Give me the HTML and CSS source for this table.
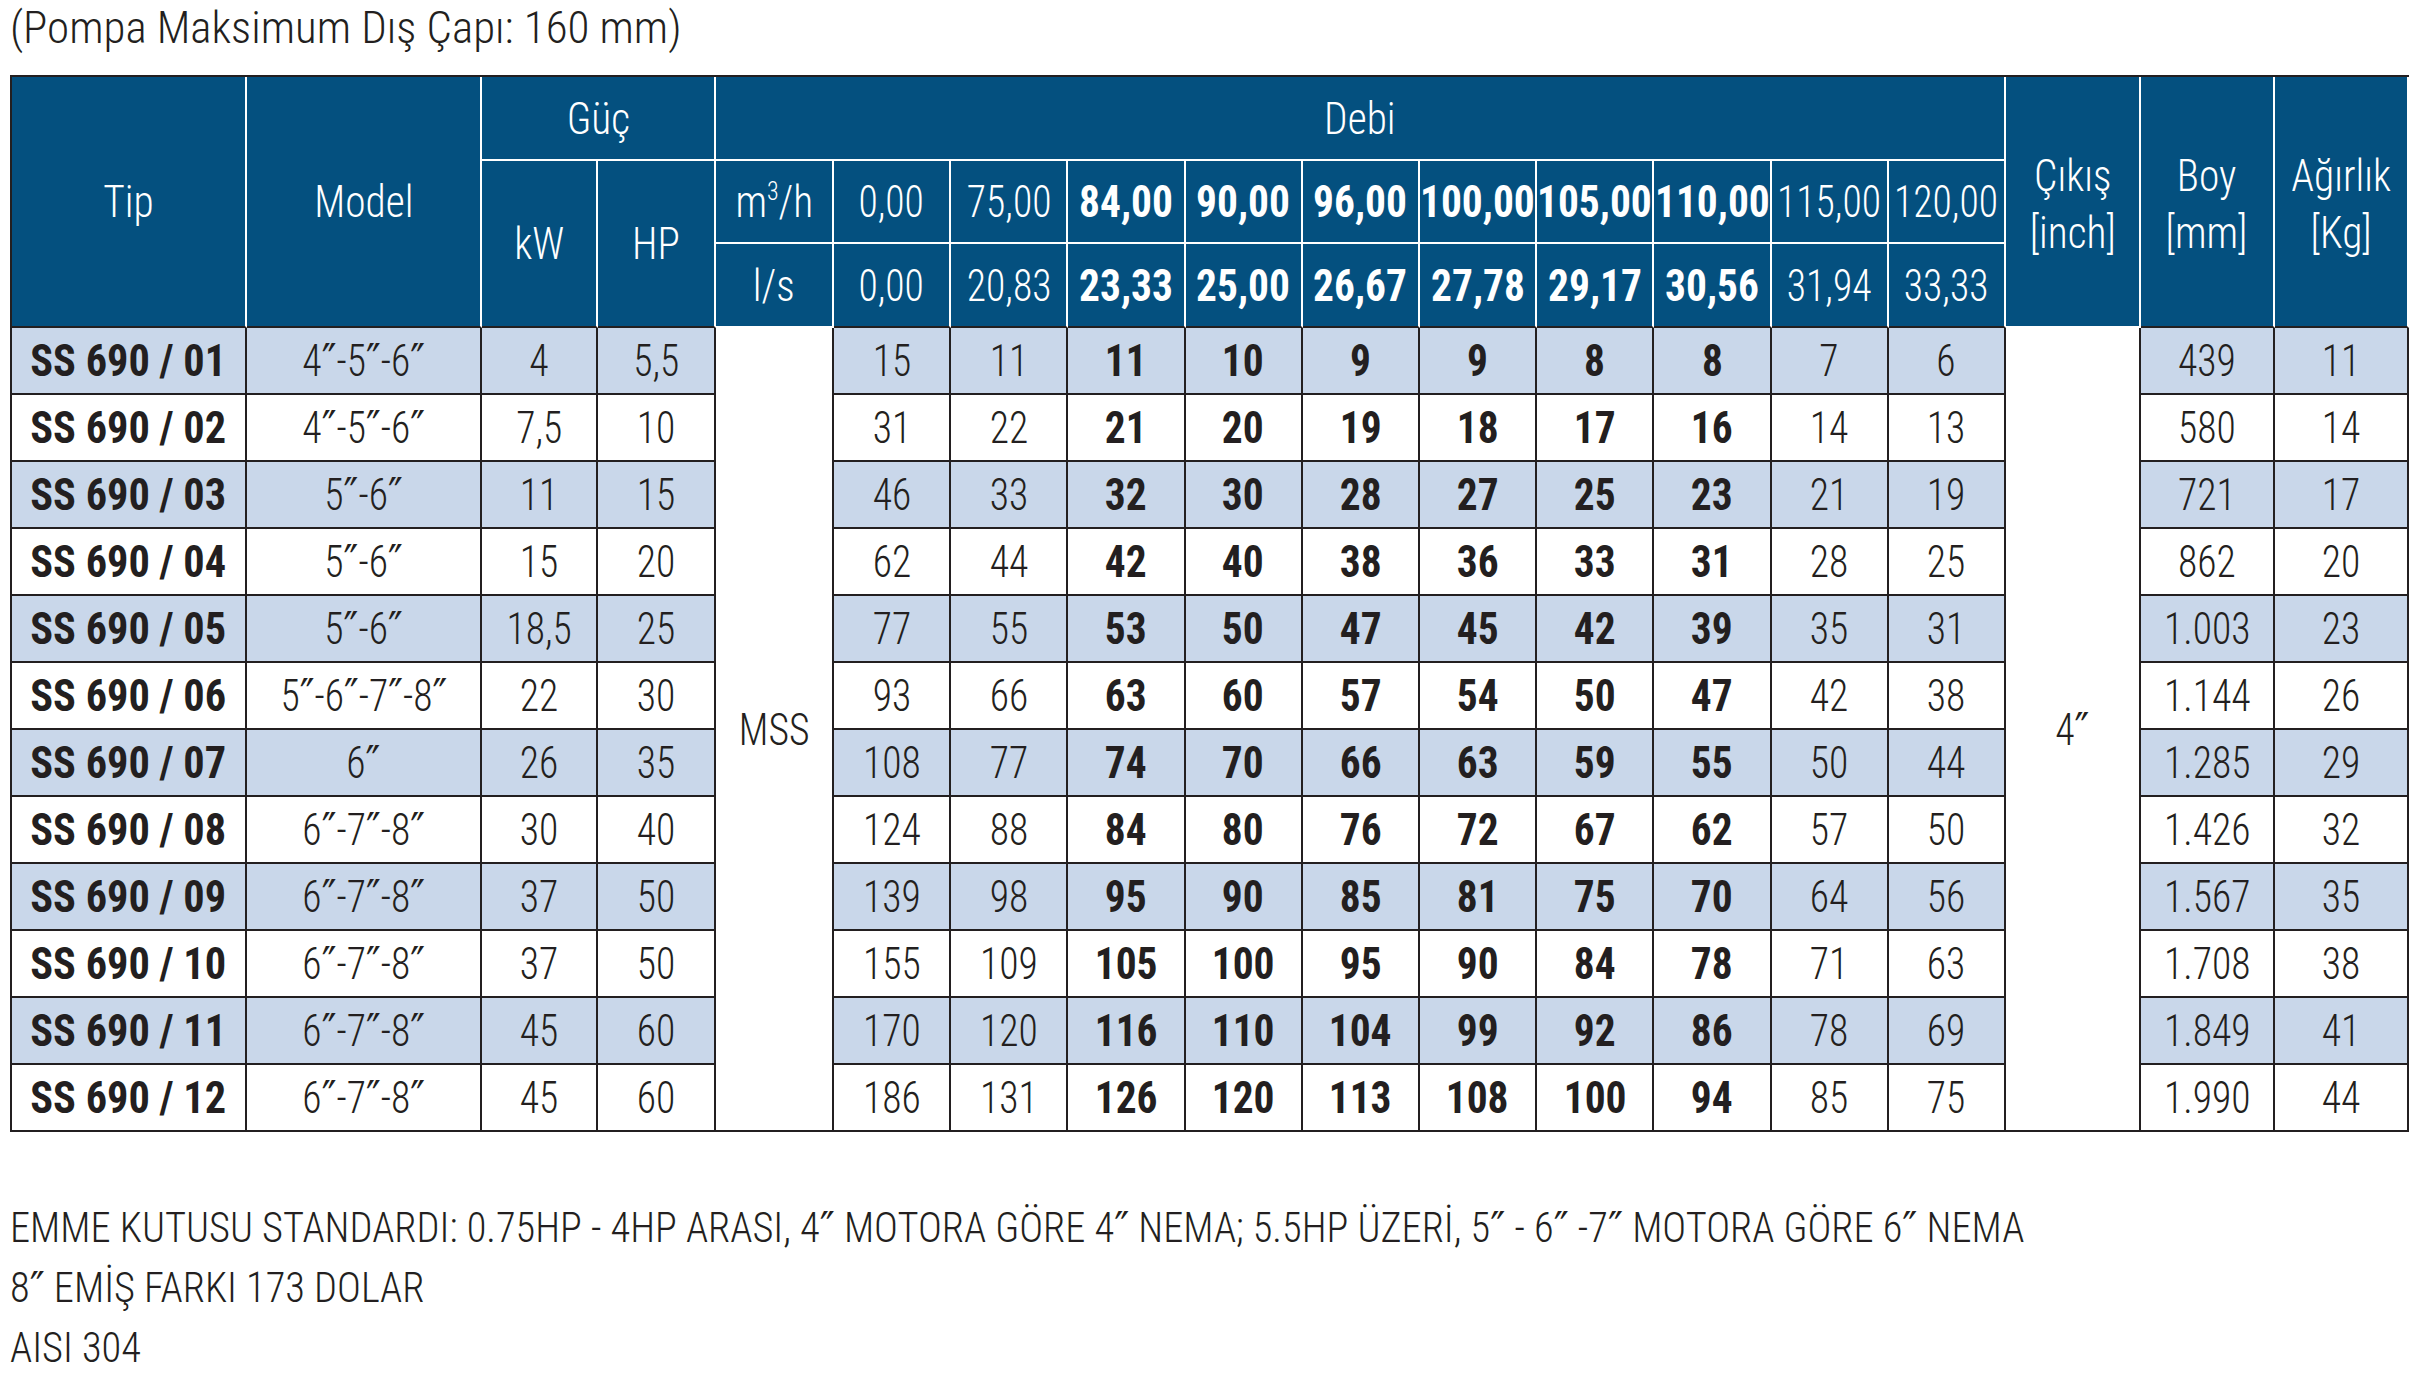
FILE: index.html
```html
<!DOCTYPE html>
<html lang="tr">
<head>
<meta charset="utf-8">
<title>SS 690</title>
<link rel="stylesheet" href="styles.css">
</head>
<body>
<p class="title"><span class="t">(Pompa Maksimum Dış Çapı: 160 mm)</span></p>
<div class="grid">
  <div class="h w r3 bd"><span class="t">Tip</span></div>
  <div class="h w r3 bd"><span class="t">Model</span></div>
  <div class="h w c2"><span class="t">Güç</span></div>
  <div class="h w c11"><span class="t">Debi</span></div>
  <div class="h w r3 bw two"><span class="t">Çıkış<br>[inch]</span></div>
  <div class="h w r3 bd two"><span class="t">Boy<br>[mm]</span></div>
  <div class="h w r3 bd two"><span class="t">Ağırlık<br>[Kg]</span></div>

  <div class="h w r2 bd"><span class="t">kW</span></div>
  <div class="h w r2 bd"><span class="t">HP</span></div>
  <div class="h w"><span class="t">m<sup>3</sup>/h</span></div>
  <div class="h"><span class="t">0,00</span></div>
  <div class="h"><span class="t">75,00</span></div>
  <div class="h b"><span class="t">84,00</span></div>
  <div class="h b"><span class="t">90,00</span></div>
  <div class="h b"><span class="t">96,00</span></div>
  <div class="h b"><span class="t">100,00</span></div>
  <div class="h b"><span class="t">105,00</span></div>
  <div class="h b"><span class="t">110,00</span></div>
  <div class="h"><span class="t">115,00</span></div>
  <div class="h"><span class="t">120,00</span></div>

  <div class="h w bw"><span class="t">l/s</span></div>
  <div class="h bd"><span class="t">0,00</span></div>
  <div class="h bd"><span class="t">20,83</span></div>
  <div class="h bd b"><span class="t">23,33</span></div>
  <div class="h bd b"><span class="t">25,00</span></div>
  <div class="h bd b"><span class="t">26,67</span></div>
  <div class="h bd b"><span class="t">27,78</span></div>
  <div class="h bd b"><span class="t">29,17</span></div>
  <div class="h bd b"><span class="t">30,56</span></div>
  <div class="h bd"><span class="t">31,94</span></div>
  <div class="h bd"><span class="t">33,33</span></div>

  <!-- row 01 -->
  <div class="d a b tip"><span class="t">SS 690 / 01</span></div><div class="d a"><span class="t">4<span class="q">″</span>-5<span class="q">″</span>-6<span class="q">″</span></span></div><div class="d a"><span class="t">4</span></div><div class="d a"><span class="t">5,5</span></div>
  <div class="d sp"><span class="t">MSS</span></div>
  <div class="d a"><span class="t">15</span></div><div class="d a"><span class="t">11</span></div><div class="d a b"><span class="t">11</span></div><div class="d a b"><span class="t">10</span></div><div class="d a b"><span class="t">9</span></div><div class="d a b"><span class="t">9</span></div><div class="d a b"><span class="t">8</span></div><div class="d a b"><span class="t">8</span></div><div class="d a"><span class="t">7</span></div><div class="d a"><span class="t">6</span></div>
  <div class="d sp"><span class="t">4<span class="q">″</span></span></div>
  <div class="d a"><span class="t">439</span></div><div class="d a"><span class="t">11</span></div>
  <!-- row 02 -->
  <div class="d b tip"><span class="t">SS 690 / 02</span></div><div class="d"><span class="t">4<span class="q">″</span>-5<span class="q">″</span>-6<span class="q">″</span></span></div><div class="d"><span class="t">7,5</span></div><div class="d"><span class="t">10</span></div>
  <div class="d"><span class="t">31</span></div><div class="d"><span class="t">22</span></div><div class="d b"><span class="t">21</span></div><div class="d b"><span class="t">20</span></div><div class="d b"><span class="t">19</span></div><div class="d b"><span class="t">18</span></div><div class="d b"><span class="t">17</span></div><div class="d b"><span class="t">16</span></div><div class="d"><span class="t">14</span></div><div class="d"><span class="t">13</span></div>
  <div class="d"><span class="t">580</span></div><div class="d"><span class="t">14</span></div>
  <!-- row 03 -->
  <div class="d a b tip"><span class="t">SS 690 / 03</span></div><div class="d a"><span class="t">5<span class="q">″</span>-6<span class="q">″</span></span></div><div class="d a"><span class="t">11</span></div><div class="d a"><span class="t">15</span></div>
  <div class="d a"><span class="t">46</span></div><div class="d a"><span class="t">33</span></div><div class="d a b"><span class="t">32</span></div><div class="d a b"><span class="t">30</span></div><div class="d a b"><span class="t">28</span></div><div class="d a b"><span class="t">27</span></div><div class="d a b"><span class="t">25</span></div><div class="d a b"><span class="t">23</span></div><div class="d a"><span class="t">21</span></div><div class="d a"><span class="t">19</span></div>
  <div class="d a"><span class="t">721</span></div><div class="d a"><span class="t">17</span></div>
  <!-- row 04 -->
  <div class="d b tip"><span class="t">SS 690 / 04</span></div><div class="d"><span class="t">5<span class="q">″</span>-6<span class="q">″</span></span></div><div class="d"><span class="t">15</span></div><div class="d"><span class="t">20</span></div>
  <div class="d"><span class="t">62</span></div><div class="d"><span class="t">44</span></div><div class="d b"><span class="t">42</span></div><div class="d b"><span class="t">40</span></div><div class="d b"><span class="t">38</span></div><div class="d b"><span class="t">36</span></div><div class="d b"><span class="t">33</span></div><div class="d b"><span class="t">31</span></div><div class="d"><span class="t">28</span></div><div class="d"><span class="t">25</span></div>
  <div class="d"><span class="t">862</span></div><div class="d"><span class="t">20</span></div>
  <!-- row 05 -->
  <div class="d a b tip"><span class="t">SS 690 / 05</span></div><div class="d a"><span class="t">5<span class="q">″</span>-6<span class="q">″</span></span></div><div class="d a"><span class="t">18,5</span></div><div class="d a"><span class="t">25</span></div>
  <div class="d a"><span class="t">77</span></div><div class="d a"><span class="t">55</span></div><div class="d a b"><span class="t">53</span></div><div class="d a b"><span class="t">50</span></div><div class="d a b"><span class="t">47</span></div><div class="d a b"><span class="t">45</span></div><div class="d a b"><span class="t">42</span></div><div class="d a b"><span class="t">39</span></div><div class="d a"><span class="t">35</span></div><div class="d a"><span class="t">31</span></div>
  <div class="d a"><span class="t">1.003</span></div><div class="d a"><span class="t">23</span></div>
  <!-- row 06 -->
  <div class="d b tip"><span class="t">SS 690 / 06</span></div><div class="d"><span class="t">5<span class="q">″</span>-6<span class="q">″</span>-7<span class="q">″</span>-8<span class="q">″</span></span></div><div class="d"><span class="t">22</span></div><div class="d"><span class="t">30</span></div>
  <div class="d"><span class="t">93</span></div><div class="d"><span class="t">66</span></div><div class="d b"><span class="t">63</span></div><div class="d b"><span class="t">60</span></div><div class="d b"><span class="t">57</span></div><div class="d b"><span class="t">54</span></div><div class="d b"><span class="t">50</span></div><div class="d b"><span class="t">47</span></div><div class="d"><span class="t">42</span></div><div class="d"><span class="t">38</span></div>
  <div class="d"><span class="t">1.144</span></div><div class="d"><span class="t">26</span></div>
  <!-- row 07 -->
  <div class="d a b tip"><span class="t">SS 690 / 07</span></div><div class="d a"><span class="t">6<span class="q">″</span></span></div><div class="d a"><span class="t">26</span></div><div class="d a"><span class="t">35</span></div>
  <div class="d a"><span class="t">108</span></div><div class="d a"><span class="t">77</span></div><div class="d a b"><span class="t">74</span></div><div class="d a b"><span class="t">70</span></div><div class="d a b"><span class="t">66</span></div><div class="d a b"><span class="t">63</span></div><div class="d a b"><span class="t">59</span></div><div class="d a b"><span class="t">55</span></div><div class="d a"><span class="t">50</span></div><div class="d a"><span class="t">44</span></div>
  <div class="d a"><span class="t">1.285</span></div><div class="d a"><span class="t">29</span></div>
  <!-- row 08 -->
  <div class="d b tip"><span class="t">SS 690 / 08</span></div><div class="d"><span class="t">6<span class="q">″</span>-7<span class="q">″</span>-8<span class="q">″</span></span></div><div class="d"><span class="t">30</span></div><div class="d"><span class="t">40</span></div>
  <div class="d"><span class="t">124</span></div><div class="d"><span class="t">88</span></div><div class="d b"><span class="t">84</span></div><div class="d b"><span class="t">80</span></div><div class="d b"><span class="t">76</span></div><div class="d b"><span class="t">72</span></div><div class="d b"><span class="t">67</span></div><div class="d b"><span class="t">62</span></div><div class="d"><span class="t">57</span></div><div class="d"><span class="t">50</span></div>
  <div class="d"><span class="t">1.426</span></div><div class="d"><span class="t">32</span></div>
  <!-- row 09 -->
  <div class="d a b tip"><span class="t">SS 690 / 09</span></div><div class="d a"><span class="t">6<span class="q">″</span>-7<span class="q">″</span>-8<span class="q">″</span></span></div><div class="d a"><span class="t">37</span></div><div class="d a"><span class="t">50</span></div>
  <div class="d a"><span class="t">139</span></div><div class="d a"><span class="t">98</span></div><div class="d a b"><span class="t">95</span></div><div class="d a b"><span class="t">90</span></div><div class="d a b"><span class="t">85</span></div><div class="d a b"><span class="t">81</span></div><div class="d a b"><span class="t">75</span></div><div class="d a b"><span class="t">70</span></div><div class="d a"><span class="t">64</span></div><div class="d a"><span class="t">56</span></div>
  <div class="d a"><span class="t">1.567</span></div><div class="d a"><span class="t">35</span></div>
  <!-- row 10 -->
  <div class="d b tip"><span class="t">SS 690 / 10</span></div><div class="d"><span class="t">6<span class="q">″</span>-7<span class="q">″</span>-8<span class="q">″</span></span></div><div class="d"><span class="t">37</span></div><div class="d"><span class="t">50</span></div>
  <div class="d"><span class="t">155</span></div><div class="d"><span class="t">109</span></div><div class="d b"><span class="t">105</span></div><div class="d b"><span class="t">100</span></div><div class="d b"><span class="t">95</span></div><div class="d b"><span class="t">90</span></div><div class="d b"><span class="t">84</span></div><div class="d b"><span class="t">78</span></div><div class="d"><span class="t">71</span></div><div class="d"><span class="t">63</span></div>
  <div class="d"><span class="t">1.708</span></div><div class="d"><span class="t">38</span></div>
  <!-- row 11 -->
  <div class="d a b tip"><span class="t">SS 690 / 11</span></div><div class="d a"><span class="t">6<span class="q">″</span>-7<span class="q">″</span>-8<span class="q">″</span></span></div><div class="d a"><span class="t">45</span></div><div class="d a"><span class="t">60</span></div>
  <div class="d a"><span class="t">170</span></div><div class="d a"><span class="t">120</span></div><div class="d a b"><span class="t">116</span></div><div class="d a b"><span class="t">110</span></div><div class="d a b"><span class="t">104</span></div><div class="d a b"><span class="t">99</span></div><div class="d a b"><span class="t">92</span></div><div class="d a b"><span class="t">86</span></div><div class="d a"><span class="t">78</span></div><div class="d a"><span class="t">69</span></div>
  <div class="d a"><span class="t">1.849</span></div><div class="d a"><span class="t">41</span></div>
  <!-- row 12 -->
  <div class="d b tip"><span class="t">SS 690 / 12</span></div><div class="d"><span class="t">6<span class="q">″</span>-7<span class="q">″</span>-8<span class="q">″</span></span></div><div class="d"><span class="t">45</span></div><div class="d"><span class="t">60</span></div>
  <div class="d"><span class="t">186</span></div><div class="d"><span class="t">131</span></div><div class="d b"><span class="t">126</span></div><div class="d b"><span class="t">120</span></div><div class="d b"><span class="t">113</span></div><div class="d b"><span class="t">108</span></div><div class="d b"><span class="t">100</span></div><div class="d b"><span class="t">94</span></div><div class="d"><span class="t">85</span></div><div class="d"><span class="t">75</span></div>
  <div class="d"><span class="t">1.990</span></div><div class="d"><span class="t">44</span></div>
</div>
<div class="notes">
  <p><span class="t">EMME KUTUSU STANDARDI: 0.75HP - 4HP ARASI, 4<span class="q">″</span> MOTORA GÖRE 4<span class="q">″</span> NEMA; 5.5HP ÜZERİ, 5<span class="q">″</span> - 6<span class="q">″</span> -7<span class="q">″</span> MOTORA GÖRE 6<span class="q">″</span> NEMA</span></p>
  <p><span class="t">8<span class="q">″</span> EMİŞ FARKI 173 DOLAR</span></p>
  <p><span class="t">AISI 304</span></p>
</div>
</body>
</html>
```
FILE: styles.css
```css
html, body {
  margin: 0;
  padding: 0;
  background: #ffffff;
}
body {
  font-family: "Roboto Condensed", Roboto, sans-serif;
  font-weight: 300;
  color: #231f20;
}
.t {
  display: inline-block;
  white-space: nowrap;
  transform: scaleX(0.88);
}
.b .t {
  transform: scaleX(0.92);
}
.w .t {
  transform: scaleX(0.92);
}
.tip .t {
  transform: scaleX(0.94);
}
.q {
  font-family: "DejaVu Sans", sans-serif;
  font-weight: normal;
}
.title {
  margin: 0 0 21px 0;
  padding: 2px 0 0 10px;
  font-size: 45px;
  line-height: 52px;
}
.title .t {
  transform: scaleX(1);
  transform-origin: left center;
}
.notes .t {
  transform: scaleX(0.962);
  transform-origin: left center;
}
.grid {
  display: grid;
  grid-template-columns: 235px 235px 116px 118px 118px repeat(10, 117.2px) 135px 134px 134px;
  grid-template-rows: 84px 83px 84px repeat(12, 67px);
  margin-left: 10px;
  border-left: 2px solid #231f20;
  border-top: 2px solid #231f20;
  font-size: 45px;
}
.h, .d {
  box-sizing: border-box;
  display: flex;
  align-items: center;
  justify-content: center;
  text-align: center;
  white-space: nowrap;
}
.h {
  background: #04507f;
  color: #ffffff;
  border-right: 2px solid #ffffff;
  border-bottom: 2px solid #ffffff;
}
.h.bd {
  border-bottom-color: #231f20;
}
.h.bw {
  border-bottom-color: #ffffff;
}
.h.two {
  line-height: 57px;
  padding-top: 5px;
}
.h sup {
  font-size: 26px;
  line-height: 0;
  vertical-align: 17px;
}
.r3 { grid-row: span 3; }
.r2 { grid-row: span 2; }
.c2 { grid-column: span 2; }
.c11 { grid-column: span 11; }
.d {
  background: #ffffff;
  border-right: 2px solid #231f20;
  border-bottom: 2px solid #231f20;
}
.d.a {
  background: #c9d7ea;
}
.d.sp {
  grid-row: span 12;
  background: #ffffff;
}
.b {
  font-weight: 700;
}
.notes {
  margin-top: 66px;
  padding-left: 10px;
  font-size: 42px;
  line-height: 60px;
}
.notes p {
  margin: 0;
}
```
